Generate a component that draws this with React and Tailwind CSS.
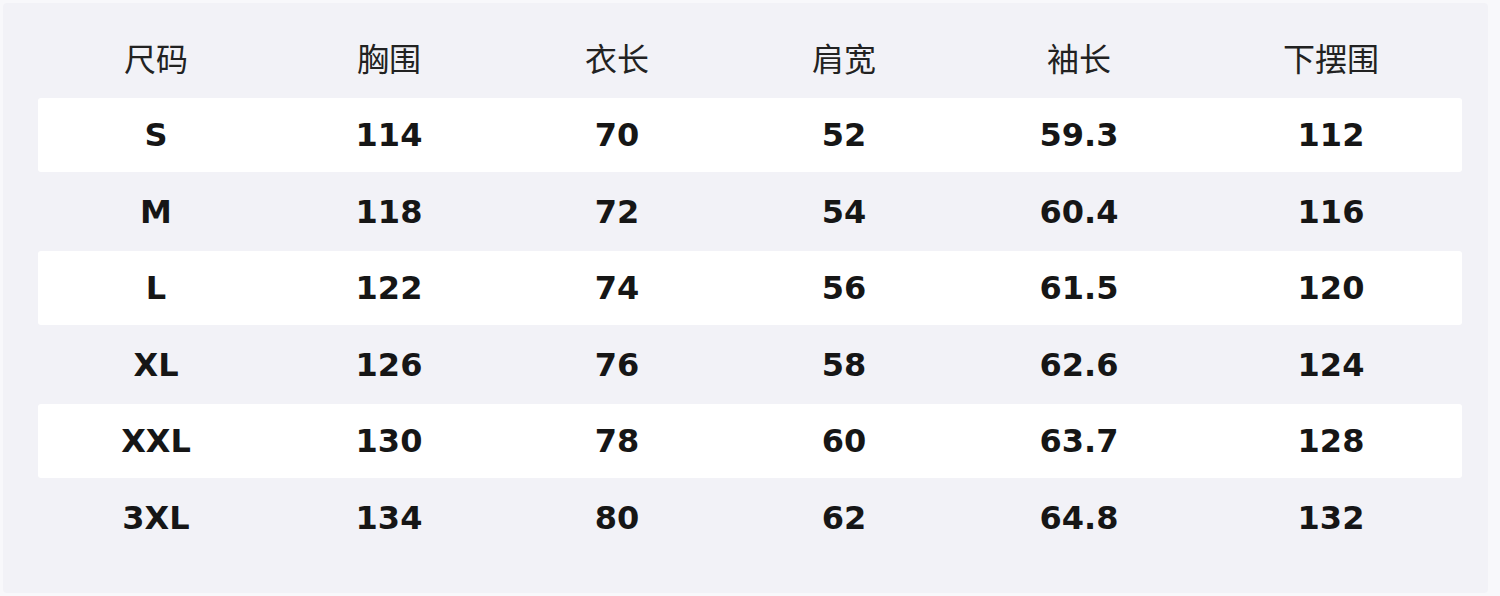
import React from "react";

const headers = ["尺码", "胸围", "衣长", "肩宽", "袖长", "下摆围"];

const rows = [
  ["S", "114", "70", "52", "59.3", "112"],
  ["M", "118", "72", "54", "60.4", "116"],
  ["L", "122", "74", "56", "61.5", "120"],
  ["XL", "126", "76", "58", "62.6", "124"],
  ["XXL", "130", "78", "60", "63.7", "128"],
  ["3XL", "134", "80", "62", "64.8", "132"],
];

const cols = "grid w-[1424px] grid-cols-[236px_230px_226px_228px_242px_262px]";

function App() {
  return (
    <div className="w-[1500px] h-[596px] bg-[#f8f8fb] p-[3px] pr-[12px]">
      <div className="h-full bg-[#f2f2f7] rounded-[4px] pl-[35px] pt-[17px]">
        <div className={`${cols} h-[74px] items-center text-[32px] text-[#222222] font-['Noto_Sans_CJK_SC',sans-serif]`}>
          {headers.map((h) => (
            <div key={h} className="text-center">{h}</div>
          ))}
        </div>
        <div className="mt-[4px] flex flex-col gap-[2.5px]">
          {rows.map((r, i) => (
            <div
              key={r[0]}
              className={`${cols} h-[74px] items-center rounded-[3px] ${i % 2 === 0 ? "bg-white" : "bg-transparent"}`}
            >
              {r.map((c, j) => (
                <div key={j} className="text-center text-[32px] font-bold text-[#161616] font-['DejaVu_Sans',sans-serif] leading-none">
                  {c}
                </div>
              ))}
            </div>
          ))}
        </div>
      </div>
    </div>
  );
}

export default App;
